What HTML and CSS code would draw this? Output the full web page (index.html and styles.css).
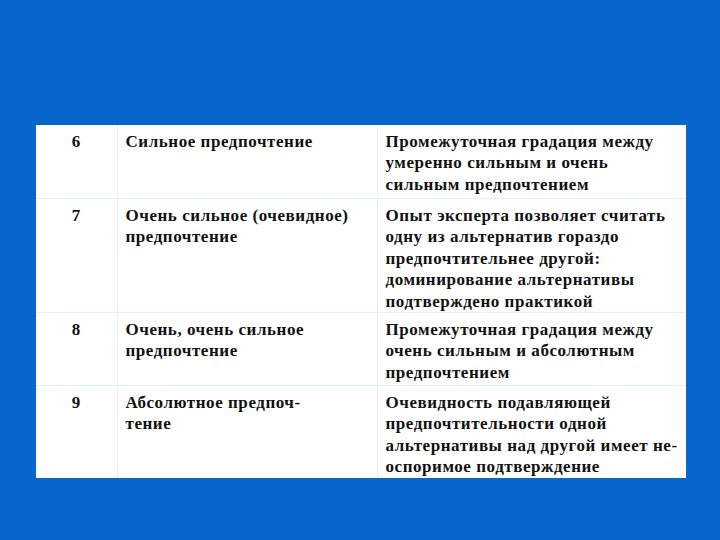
FILE: index.html
```html
<!DOCTYPE html>
<html lang="ru">
<head>
<meta charset="utf-8">
<link rel="stylesheet" href="styles.css">
</head>
<body>
<div class="slide">
  <table class="scale">
    <colgroup>
      <col class="c-num">
      <col class="c-name">
      <col class="c-desc">
    </colgroup>
    <tr class="r1">
      <td class="num">6</td>
      <td>Сильное предпочтение</td>
      <td>Промежуточная градация между<br>умеренно сильным и очень<br>сильным предпочтением</td>
    </tr>
    <tr class="r2">
      <td class="num">7</td>
      <td>Очень сильное (очевидное)<br>предпочтение</td>
      <td>Опыт эксперта позволяет считать<br>одну из альтернатив гораздо<br>предпочтительнее другой:<br>доминирование альтернативы<br>подтверждено практикой</td>
    </tr>
    <tr class="r3">
      <td class="num">8</td>
      <td>Очень, очень сильное<br>предпочтение</td>
      <td>Промежуточная градация между<br>очень сильным и абсолютным<br>предпочтением</td>
    </tr>
    <tr class="r4">
      <td class="num">9</td>
      <td>Абсолютное предпоч-<br>тение</td>
      <td>Очевидность подавляющей<br>предпочтительности одной<br>альтернативы над другой имеет не-<br>оспоримое подтверждение</td>
    </tr>
  </table>
</div>
</body>
</html>
```

FILE: styles.css
```css
html, body {
  margin: 0;
  padding: 0;
  background: #0866cc;
}
.slide {
  width: 720px;
  height: 540px;
  box-sizing: border-box;
  padding: 125px 0 0 36px;
  background: #0866cc;
}
.scale {
  width: 650px;
  border-collapse: collapse;
  table-layout: fixed;
  background: #ffffff;
  font-family: "Liberation Serif", "Times New Roman", serif;
  font-weight: 700;
  font-size: 17px;
  letter-spacing: 0.55px;
  line-height: 21.4px;
  color: #111111;
}
.c-num { width: 81px; }
.c-name { width: 260px; }
.c-desc { width: 309px; }
.scale td {
  vertical-align: top;
  padding: 6px 2px 0 8px;
  border-left: 1px solid #eceff1;
  border-top: 1px solid #e4f2ef;
  white-space: nowrap;
}
.scale tr:first-child td { border-top: none; }
.scale td:first-child { border-left: none; }
.scale td.num {
  text-align: center;
  padding-left: 0;
  padding-right: 0;
}
.r1 td { height: 67px; }
.r2 td { height: 107px; }
.r3 td { height: 66px; }
.r4 td { height: 85px; }
```
